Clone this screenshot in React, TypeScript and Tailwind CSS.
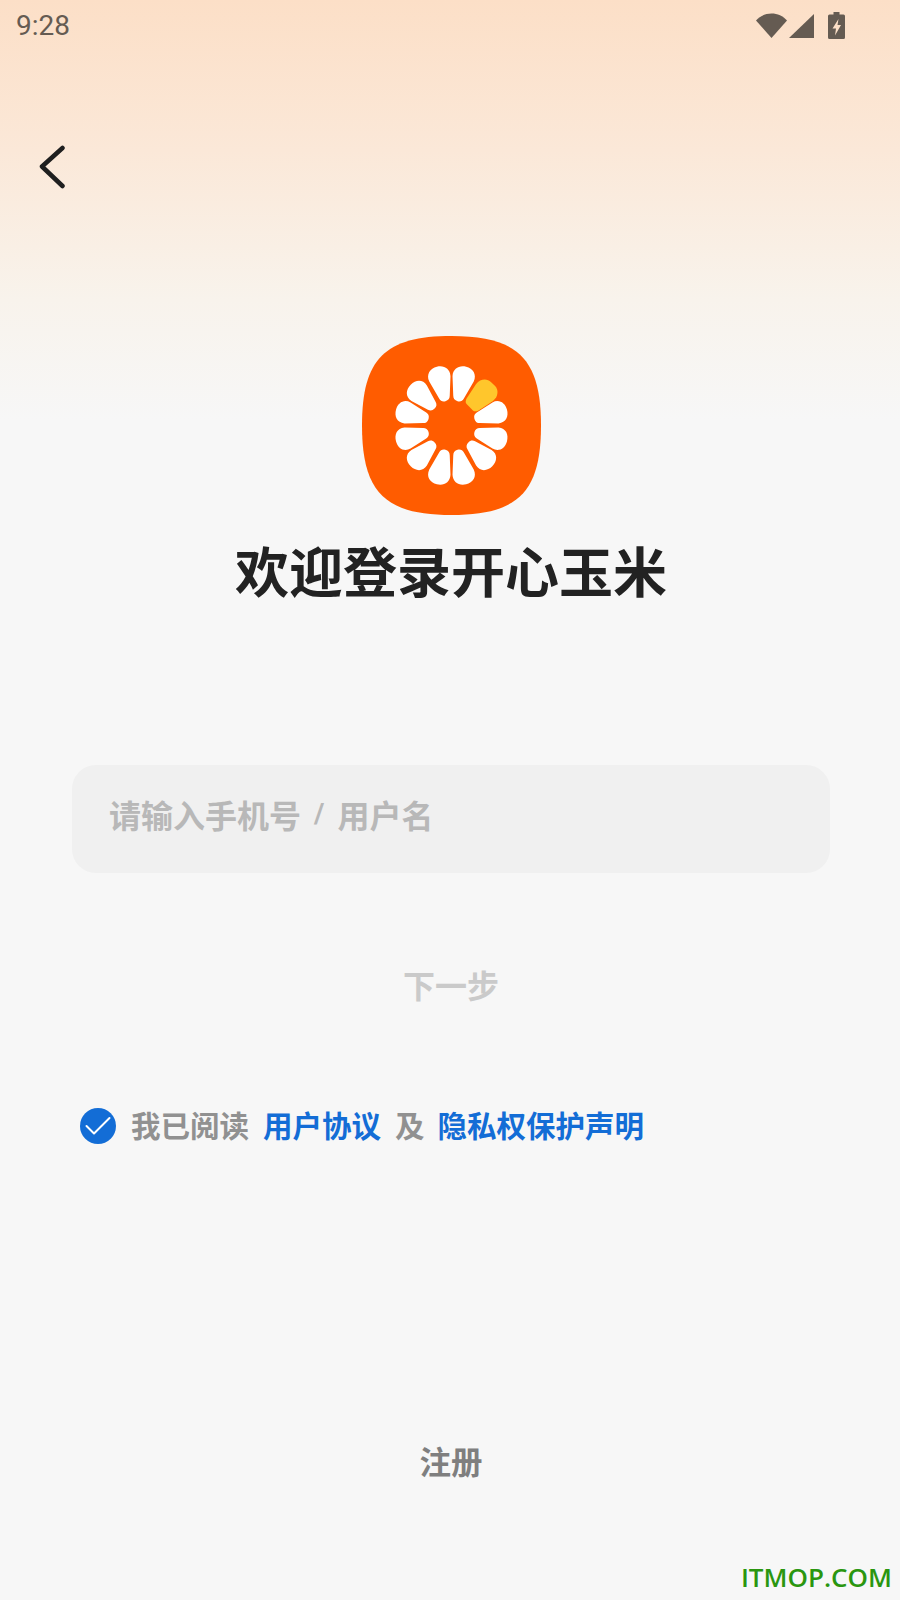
const cjk = "font-['Noto_Sans_CJK_SC','Noto_Sans',sans-serif]";

// the four petals nearest the vertical axis are a little longer than the rest
const petals = [
  { angle: 14, scale: 1.05 },
  { angle: 74, scale: 1 },
  { angle: 106, scale: 1 },
  { angle: 135, scale: 1 },
  { angle: 166, scale: 1.05 },
  { angle: 194, scale: 1.05 },
  { angle: 225, scale: 1 },
  { angle: 254, scale: 1 },
  { angle: 286, scale: 1 },
  { angle: 315, scale: 1 },
  { angle: 346, scale: 1.05 },
];

function Logo() {
  return (
    <svg width="179" height="179" viewBox="0 0 180 180">
      <path
        d="M90 0C157 0 180 23 180 90C180 157 157 180 90 180C23 180 0 157 0 90C0 23 23 0 90 0Z"
        fill="#ff5c00"
      />
      <g transform="translate(90 90)">
        {petals.map((p) => (
          <path
            key={p.angle}
            transform={`rotate(${p.angle}) scale(1 ${p.scale})`}
            d="M0 -24C-3 -24 -4.8 -25.5 -5.5 -28L-11 -46C-12.5 -53.5 -7 -58 0 -58C7 -58 12.5 -53.5 11 -46L5.5 -28C4.8 -25.5 3 -24 0 -24Z"
            fill="#ffffff"
          />
        ))}
        <path
          transform="rotate(45)"
          d="M-4.5 -26C-6.5 -26 -8 -28 -8.5 -30L-12 -47C-13 -54 -8 -59 -3 -59L3 -59C8 -59 13 -54 12 -47L8.5 -30C8 -28 6.5 -26 4.5 -26Z"
          fill="#ffc62c"
        />
      </g>
    </svg>
  );
}

function StatusBar() {
  return (
    <div className="flex h-[50px] items-center justify-between pl-4 pr-[55px] pt-[1px]">
      <span className="font-['Roboto',sans-serif] text-[28px] leading-none font-normal text-[#655b52]">9:28</span>
      <div className="flex items-center">
        <svg width="31" height="25" viewBox="0 0 31 25" fill="#655b52">
          <path d="M0 7.5C4 3 9.5 0.5 15.5 0.5C21.5 0.5 27 3 31 7.5L15.5 25Z" />
        </svg>
        <svg width="25" height="25" viewBox="0 0 25 25" fill="#655b52" className="ml-[2px]">
          <path d="M25 1V25H0Z" />
        </svg>
        <svg width="17" height="27" viewBox="0 0 17 27" className="ml-[14px]">
          <path d="M5.5 0H11.5V2.5H15.5Q17 2.5 17 4V25.5Q17 27 15.5 27H1.5Q0 27 0 25.5V4Q0 2.5 1.5 2.5H5.5Z" fill="#655b52" />
          <path d="M10.5 7L4.5 16.5H8L7 23.5L13 13H9.5Z" fill="#fcdfc7" />
        </svg>
      </div>
    </div>
  );
}

export default function App() {
  return (
    <div className={`relative flex h-[1600px] w-[900px] flex-col overflow-hidden bg-[linear-gradient(180deg,#fcdfc7_0px,#fbe8d8_150px,#f8f3ec_300px,#f7f7f7_420px)] ${cjk}`}>
      <StatusBar />

      <div className="mt-[93px] pl-[38px]">
        <svg width="30" height="46" viewBox="0 0 30 46" fill="none">
          <path d="M24.5 5L4 23.5L24.5 43" stroke="#1f1f1f" strokeWidth="4.5" strokeLinecap="round" strokeLinejoin="round" />
        </svg>
      </div>

      <div className="mt-[147px] flex flex-col items-center pl-[2px]">
        <Logo />
        <h1 className="mt-[17px] text-[54px] leading-[76px] font-bold text-[#222222]">欢迎登录开心玉米</h1>
      </div>

      <div className="mt-[157px] mr-[70px] ml-[72px] flex h-[108px] items-center rounded-[24px] bg-[#f0f0f0] pb-[10px] pl-[37px]">
        <span className="flex items-center text-[32px] font-bold text-[#b8b8b8]">
          请输入手机号
          <span className="ml-[13px] font-['Roboto',sans-serif] text-[28px] font-bold">/</span>
          <span className="ml-[13px]">用户名</span>
        </span>
      </div>

      <div className="mt-[86px] pl-[2px] text-center text-[32px] leading-[50px] font-bold text-[#cacaca]">下一步</div>

      <div className="mt-[93px] ml-[80px] flex items-center text-[29.5px] leading-[44px] font-bold">
        <span className="mt-[4px] flex h-[36px] w-[36px] items-center justify-center rounded-full bg-[#136dd6]">
          <svg width="26" height="20" viewBox="0 0 26 20" fill="none">
            <path d="M1.5 10L9 17.5L24.5 2" stroke="#ffffff" strokeWidth="2" strokeLinecap="round" strokeLinejoin="round" />
          </svg>
        </span>
        <span className="ml-[15px] text-[#919191]">我已阅读</span>
        <span className="ml-[14px] text-[#136dd6]">用户协议</span>
        <span className="ml-[14px] text-[#919191]">及</span>
        <span className="ml-[13px] text-[#136dd6]">隐私权保护声明</span>
      </div>

      <div className="mt-[289px] pl-[2px] text-center text-[31.5px] leading-[50px] font-bold text-[#7f7f7f]">注册</div>

      <span className="absolute right-[8px] bottom-[7px] font-['Open_Sans',sans-serif] text-[26px] leading-[32px] font-semibold text-[#2a9610]">ITMOP.COM</span>
    </div>
  );
}
